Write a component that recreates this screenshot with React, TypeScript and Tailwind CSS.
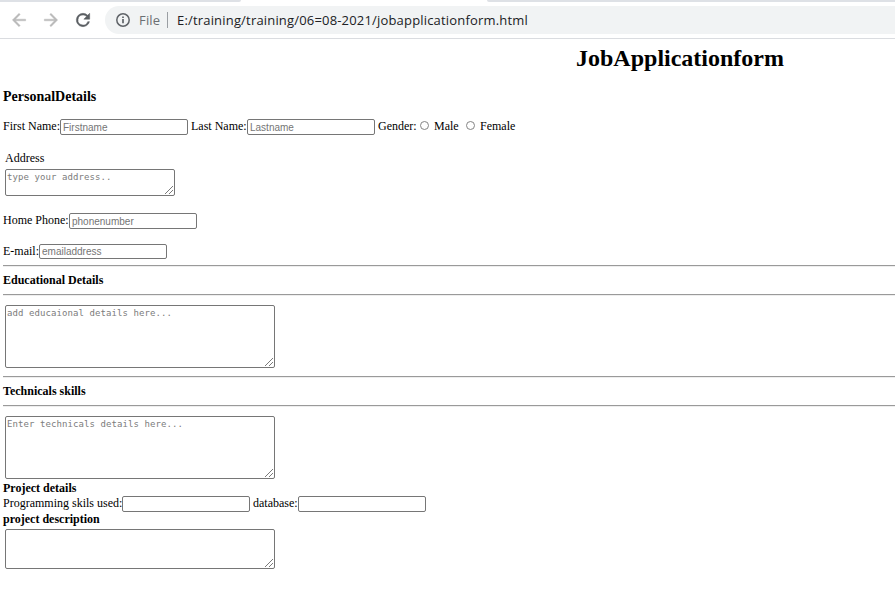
import type { ReactNode } from "react";

const fieldClass =
  "block shrink-0 rounded-[2px] border border-[#767676] bg-white px-[2px] py-0 font-['Liberation_Sans',Arial,sans-serif] text-[10px] leading-[12px] outline-none placeholder:text-[#757575]";

function Field({ size = "h-[16px]", placeholder }: { size?: string; placeholder?: string }) {
  return <input type="text" placeholder={placeholder} className={`${fieldClass} ${size} w-[128px]`} />;
}

function Area({ size, placeholder }: { size: string; placeholder?: string }) {
  return (
    <div className={`relative ml-[5px] ${size}`}>
      <textarea
        placeholder={placeholder}
        className="block h-full w-full resize-none rounded-[2px] border border-[#767676] bg-white px-[1px] py-[2px] font-['DejaVu_Sans_Mono',monospace] text-[9px] leading-[11px] tracking-[0.08px] outline-none placeholder:text-[#7c7c7c]"
      />
      <svg
        className="absolute right-[2px] bottom-[2px]"
        width="8"
        height="8"
        viewBox="0 0 8 8"
        stroke="#6b6b6b"
        strokeWidth="0.9"
        fill="none"
      >
        <path d="M0 8L8 0M4 8L8 4" />
      </svg>
    </div>
  );
}

function Label({ width, children }: { width: string; children: ReactNode }) {
  return <span className={`-mt-px block shrink-0 whitespace-nowrap ${width}`}>{children}</span>;
}

function Rule() {
  return <hr className="ml-[3px] h-[2px] border-0 border-t border-b border-t-[#9a9a9a] border-b-[#eeeeee]" />;
}

function Radio() {
  return (
    <input
      type="radio"
      name="gender"
      className="mt-[2px] block h-[9px] w-[9px] shrink-0 appearance-none rounded-full border border-[#858585] bg-white"
    />
  );
}

function Toolbar() {
  return (
    <header className="font-['Open_Sans','Noto_Sans',sans-serif]">
      <div className="flex h-[2px] justify-between bg-white">
        <div className="w-[241px] rounded-br-[2px] bg-[#dee1e6]" />
        <div className="w-[408px] rounded-bl-[2px] bg-[#dee1e6]" />
      </div>
      <div className="flex h-[37px] items-start border-b border-[#dadce0] bg-white pt-[4px]">
        <div className="flex h-[28px] w-[105px] items-center">
          <svg className="ml-[9px]" width="20" height="20" viewBox="0 0 24 24" fill="#bababa" stroke="#bababa" strokeWidth=".5">
            <path d="M20 11H7.83l5.59-5.59L12 4l-8 8 8 8 1.41-1.41L7.83 13H20v-2z" />
          </svg>
          <svg className="ml-[12px]" width="20" height="20" viewBox="0 0 24 24" fill="#bababa" stroke="#bababa" strokeWidth=".5">
            <path d="M12 4l-1.41 1.41L16.17 11H4v2h12.17l-5.58 5.59L12 20l8-8z" />
          </svg>
          <svg className="ml-[12px]" width="20" height="20" viewBox="0 0 24 24" fill="#5a5e62">
            <path
              d="M17.65 6.35A7.96 7.96 0 0 0 12 4a8 8 0 1 0 7.73 10h-2.08A6 6 0 1 1 12 6c1.66 0 3.14.69 4.22 1.78L13 11h7V4l-2.35 2.35z"
              stroke="#5a5e62"
              strokeWidth=".6"
            />
          </svg>
        </div>
        <div className="flex h-[28px] flex-1 items-center rounded-l-full bg-[#f1f3f4] pl-[10px] text-[13px] leading-[28px] tracking-[0.18px] whitespace-nowrap">
          <svg width="16" height="16" viewBox="0 0 16 16" fill="none" stroke="#5f6368" strokeWidth="1.5">
            <circle cx="8" cy="8" r="6.2" />
            <path d="M8 7v4.2M8 4.6v1.5" strokeWidth="1.7" />
          </svg>
          <span className="ml-[8px] w-[28px] text-[#6b6f73]">File</span>
          <span className="h-[16px] w-px bg-[#9a9ea3]" />
          <span className="ml-[9px] text-[#202124]">E:/training/training/06=08-2021/jobapplicationform.html</span>
        </div>
      </div>
    </header>
  );
}

export default function App() {
  return (
    <div className="h-[609px] w-[895px] overflow-hidden bg-white text-black">
      <Toolbar />
      <main className="font-['Liberation_Serif','Times_New_Roman',serif] text-[12px] leading-[16px]">
        <h1 className="ml-[576px] pt-[5px] text-[24px] leading-[28px] font-bold">JobApplicationform</h1>
        <h2 className="mt-[17px] ml-[3px] text-[14px] leading-[16px] font-bold">PersonalDetails</h2>
        <div className="mt-[14px] ml-[3px] flex h-[16px]">
          <Label width="w-[57px]">First Name:</Label>
          <Field placeholder="Firstname" />
          <Label width="w-[59px] pl-[3px]">Last Name:</Label>
          <Field placeholder="Lastname" />
          <Label width="w-[45px] pl-[3px]">Gender:</Label>
          <Radio />
          <Label width="w-[37px] pl-[5px]">Male</Label>
          <Radio />
          <Label width="w-[46px] pl-[5px]">Female</Label>
        </div>
        <div className="mt-[15px] ml-[5px] h-[19px]">Address</div>
        <Area size="h-[27px] w-[170px]" placeholder="type your address.." />
        <div className="mt-[17px] ml-[3px] flex h-[16px]">
          <Label width="w-[66px]">Home Phone:</Label>
          <Field placeholder="phonenumber" />
        </div>
        <div className="mt-[15px] ml-[3px] flex h-[15px]">
          <Label width="w-[36px]">E-mail:</Label>
          <Field size="h-[15px]" placeholder="emailaddress" />
        </div>
        <div className="h-[6px]" />
        <Rule />
        <h3 className="mt-[5px] ml-[3px] h-[22px] font-bold">Educational Details</h3>
        <Rule />
        <div className="h-[9px]" />
        <Area size="h-[63px] w-[270px]" placeholder="add educaional details here..." />
        <div className="h-[8px]" />
        <Rule />
        <h3 className="mt-[5px] ml-[3px] h-[22px] font-bold">Technicals skills</h3>
        <Rule />
        <div className="h-[9px]" />
        <Area size="h-[63px] w-[270px]" placeholder="Enter technicals details here..." />
        <h3 className="mt-[1px] ml-[3px] h-[16px] font-bold">Project details</h3>
        <div className="ml-[3px] flex h-[15px]">
          <Label width="w-[119px]">Programming skils used:</Label>
          <Field />
          <Label width="w-[48px] pl-[3px]">database:</Label>
          <Field />
        </div>
        <h3 className="ml-[3px] h-[18px] font-bold">project description</h3>
        <Area size="h-[40px] w-[270px]" />
      </main>
    </div>
  );
}
